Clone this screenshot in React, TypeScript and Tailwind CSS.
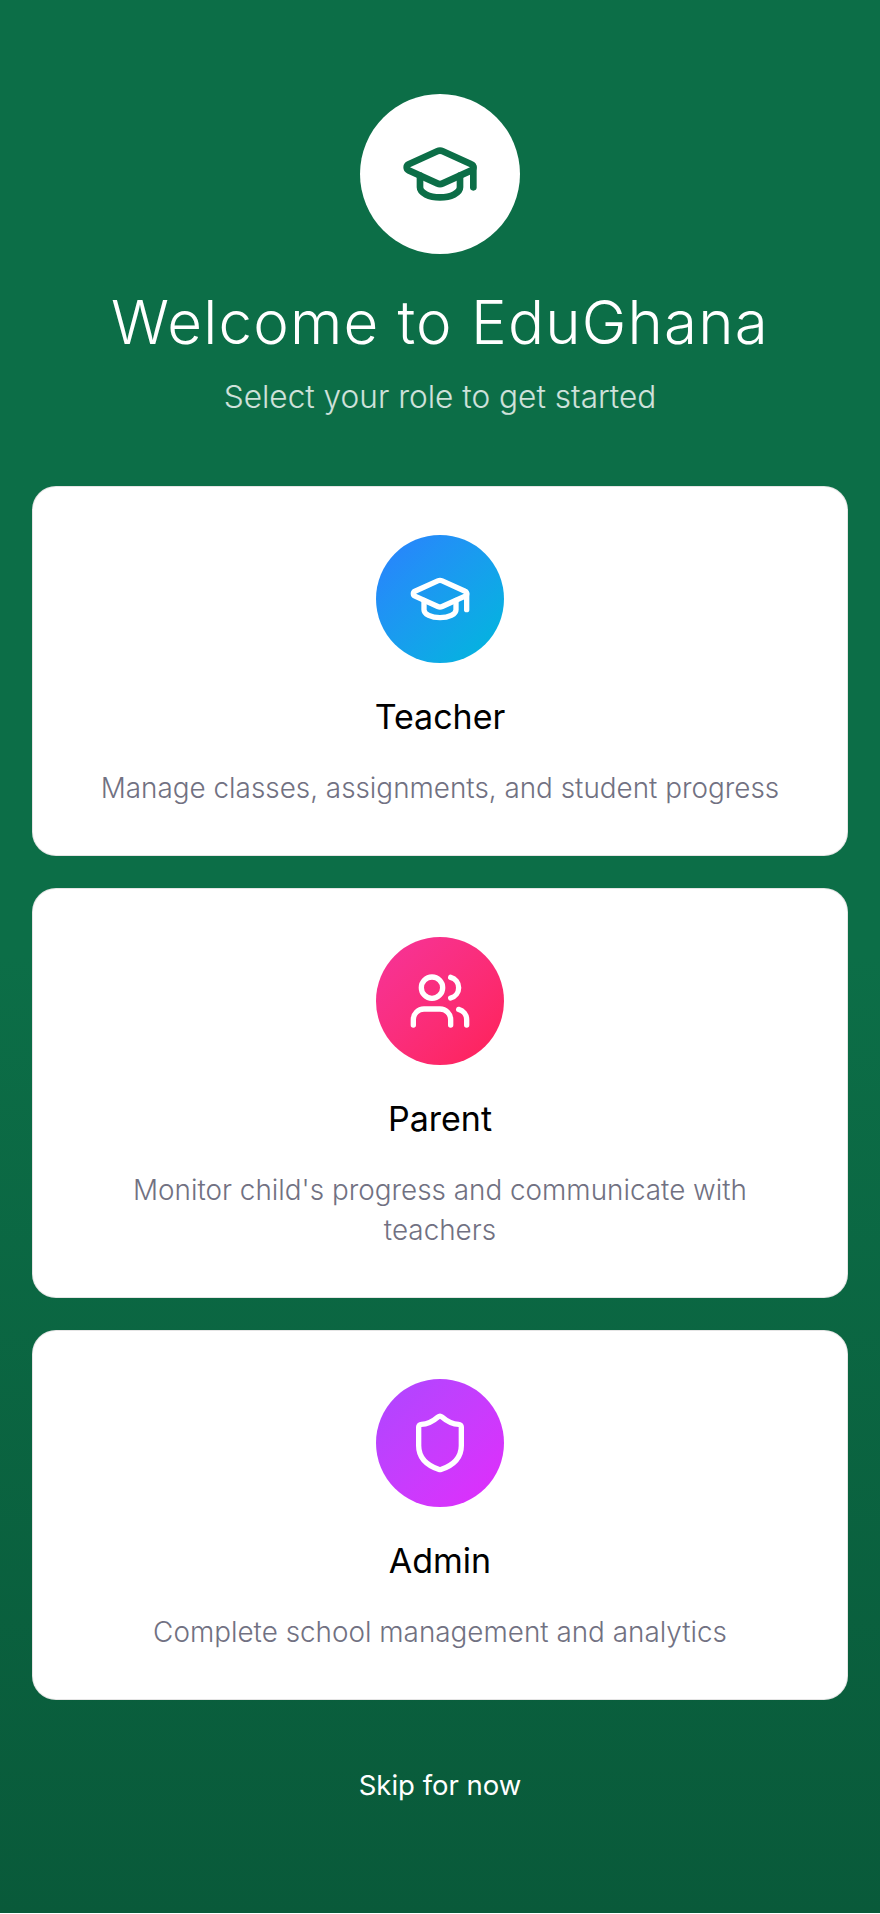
import { GraduationCap, Shield, Users, type LucideIcon } from 'lucide-react';

type Role = {
  title: string;
  description: string;
  icon: LucideIcon;
  gradient: string;
};

const roles: Role[] = [
  {
    title: 'Teacher',
    description: 'Manage classes, assignments, and student progress',
    icon: GraduationCap,
    gradient: 'from-[#2b7fff] to-[#00b8db]',
  },
  {
    title: 'Parent',
    description: "Monitor child's progress and communicate with teachers",
    icon: Users,
    gradient: 'from-[#f6339a] to-[#ff2056]',
  },
  {
    title: 'Admin',
    description: 'Complete school management and analytics',
    icon: Shield,
    gradient: 'from-[#ad46ff] to-[#e12afb]',
  },
];

function RoleCard({ title, description, icon: Icon, gradient }: Role) {
  return (
    <button
      type="button"
      className="flex w-full flex-col items-center rounded-[24px] border border-black/10 bg-white p-[48px] pb-[47px] text-center"
    >
      <div
        className={`flex h-32 w-32 items-center justify-center rounded-full bg-gradient-to-br ${gradient}`}
      >
        <Icon className="h-16 w-16 text-white" />
      </div>
      <h2 className="mt-[24px] text-[34px] leading-[60px] font-normal text-black">
        {title}
      </h2>
      <p className="mt-[21px] text-[27.85px] leading-[40px] font-light text-[#717182]">
        {description}
      </p>
    </button>
  );
}

export default function App() {
  return (
    <div className="flex h-[1913px] flex-col items-center bg-gradient-to-b from-[#0c6e47] via-[#0c6e47] to-[#095a3a] px-8 pt-[94px] font-['Inter',sans-serif]">
      <div className="flex h-40 w-40 items-center justify-center rounded-full bg-white">
        <GraduationCap className="h-20 w-20 text-[#0c6e47]" />
      </div>
      <h1 className="mt-[28px] text-[60px] leading-[80px] font-light tracking-[1.2px] text-white">
        Welcome to EduGhana
      </h1>
      <p className="mt-[11px] text-[31.6px] leading-[48px] font-light text-white/80">
        Select your role to get started
      </p>
      <div className="mt-[65px] flex w-full flex-col gap-8">
        {roles.map((role) => (
          <RoleCard key={role.title} {...role} />
        ))}
      </div>
      <button
        type="button"
        className="mt-[65px] text-[27.5px] leading-[40px] font-normal text-white"
      >
        Skip for now
      </button>
    </div>
  );
}
